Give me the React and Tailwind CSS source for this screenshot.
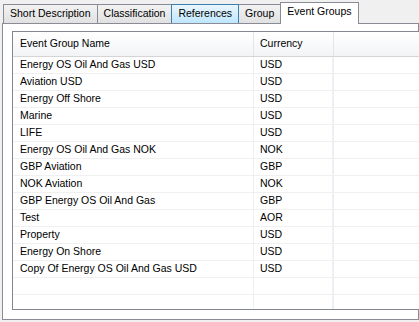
import React from 'react';

const rows = [
  ['Energy OS Oil And Gas USD', 'USD'],
  ['Aviation USD', 'USD'],
  ['Energy Off Shore', 'USD'],
  ['Marine', 'USD'],
  ['LIFE', 'USD'],
  ['Energy OS Oil And Gas NOK', 'NOK'],
  ['GBP Aviation', 'GBP'],
  ['NOK Aviation', 'NOK'],
  ['GBP Energy OS Oil And Gas', 'GBP'],
  ['Test', 'AOR'],
  ['Property', 'USD'],
  ['Energy On Shore', 'USD'],
  ['Copy Of Energy OS Oil And Gas USD', 'USD'],
  ['', ''],
  ['', ''],
];

const Tab = ({ label, hover }) => (
  <div
    className={
      'h-[19px] px-[6px] -ml-px first:ml-0 border border-b-0 flex items-center ' +
      (hover
        ? 'border-[#3c7fb1] bg-gradient-to-b from-[#eaf6fd] to-[#bee6fd] relative z-10'
        : 'border-[#898c95] bg-gradient-to-b from-[#f2f2f2] to-[#e1e1e1]')
    }
  >
    {label}
  </div>
);

const App = () => {
  return (
    <div
      className="w-[419px] h-[322px] bg-[#f0f0f0] overflow-hidden text-[10.5px] text-black"
      style={{ fontFamily: "'Liberation Sans', Arial, sans-serif" }}
    >
      <div className="h-[23px] flex items-end pl-[3px]">
        <Tab label="Short Description" />
        <Tab label="Classification" />
        <Tab label="References" hover />
        <Tab label="Group" />
        <div className="h-[22px] -ml-px mb-[-1px] px-[6px] pb-[3px] border border-b-0 border-[#898c95] bg-white flex items-center relative z-20">
          Event Groups
        </div>
      </div>
      <div className="ml-[2px] h-[297px] border border-[#898c95] bg-white pt-[7px] pl-[9px]">
        <div className="w-[430px] h-[279px] border border-[#828790] bg-white overflow-hidden">
          <div className="h-[25px] flex border-b border-[#d5d5d5] bg-gradient-to-b from-white to-[#f3f4f6]">
            <div className="w-[241px] pl-[7px] flex items-center border-r border-[#e3e5e8]">Event Group Name</div>
            <div className="w-[80px] pl-[6px] flex items-center border-r border-[#e3e5e8]">Currency</div>
            <div className="flex-1" />
          </div>
          {rows.map(([name, cur], i) => (
            <div key={i} className="h-[17px] flex border-b border-[#f0f0f0]">
              <div className="w-[241px] pl-[7px] flex items-center border-r border-[#eceff4]">{name}</div>
              <div className="w-[80px] pl-[6px] flex items-center border-r-2 border-[#eceff4]">{cur}</div>
              <div className="flex-1" />
            </div>
          ))}
        </div>
      </div>
    </div>
  );
};

export default App;
